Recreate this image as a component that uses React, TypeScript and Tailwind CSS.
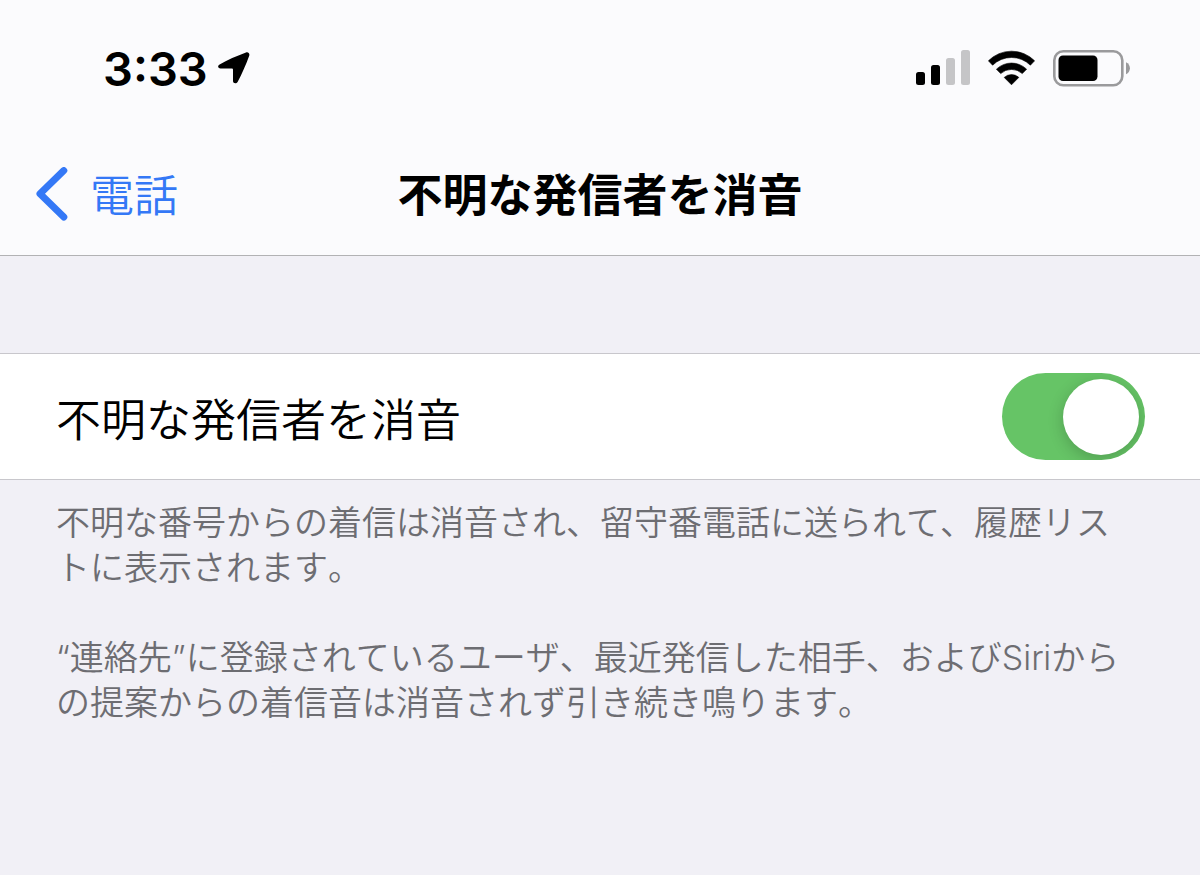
import * as React from "react";

const LocationArrow = () => (
  <svg width="32" height="32" viewBox="0 0 32 32" aria-hidden="true">
    <path
      d="M1.6 12.4C9 8.2 19 3.8 28 .5c2.2-.8 4 1 3.2 3.2C28 12.6 24 21.6 19.6 30c-1.2 2.2-4.6 1.6-4.6-.9V17.8c0-.9-.5-1.4-1.4-1.4H2.5c-2.7 0-3.2-2.7-.9-4Z"
      fill="currentColor"
    />
  </svg>
);

const SignalBars = () => (
  <svg width="54" height="36" viewBox="0 0 54 36" aria-hidden="true">
    <rect x="0" y="22" width="9" height="13" rx="2.5" fill="#000" />
    <rect x="15" y="15" width="9" height="20" rx="2.5" fill="#000" />
    <rect x="30" y="8" width="9" height="27" rx="2.5" fill="#c5c5c7" />
    <rect x="45" y="0" width="9" height="35" rx="2.5" fill="#c5c5c7" />
  </svg>
);

const WifiIcon = () => (
  <svg width="47" height="36" viewBox="0 0 47 36" aria-hidden="true">
    <g fill="#000" stroke="#000" strokeWidth="0.6" strokeLinejoin="round">
      <path d="M0.4 10.8A32.5 32.5 0 0 1 46.6 10.8L42.4 15.2A27 27 0 0 0 4.6 15.2Z" />
      <path d="M8.4 19.2A21.6 21.6 0 0 1 38.6 19.2L34.3 23.6A16 16 0 0 0 12.7 23.6Z" />
      <path d="M16.2 27.4A10.9 10.9 0 0 1 30.8 27.4L23.5 34.8Z" />
    </g>
  </svg>
);

const BatteryIcon = () => (
  <svg width="78" height="37" viewBox="0 0 78 37" aria-hidden="true">
    <rect
      x="1.3"
      y="1.3"
      width="68"
      height="34"
      rx="9"
      fill="none"
      stroke="#9a9a9c"
      strokeWidth="2.6"
    />
    <rect x="5.5" y="5.5" width="39" height="25.5" rx="4.5" fill="#000" />
    <path d="M73 12.3c5.2 2.2 5.2 9.8 0 12Z" fill="#9a9a9c" />
  </svg>
);

const BackChevron = () => (
  <svg width="32" height="58" viewBox="0 0 32 58" fill="none" aria-hidden="true">
    <path
      d="M27.8 3.6 4 26.8 27.8 50"
      stroke="currentColor"
      strokeWidth="7"
      strokeLinecap="round"
      strokeLinejoin="round"
    />
  </svg>
);

function StatusBar() {
  return (
    <div className="flex h-[136px] items-center justify-between pl-[103px] pr-[69px]">
      <div className="flex items-center gap-[10px]">
        <span className="text-[47px] font-semibold leading-none">3:33</span>
        <LocationArrow />
      </div>
      <div className="flex items-center gap-[18px]">
        <SignalBars />
        <WifiIcon />
        <BatteryIcon />
      </div>
    </div>
  );
}

function NavBar({ back, title }: { back: string; title: string }) {
  return (
    <nav className="grid h-[119px] grid-cols-[1fr_auto_1fr] items-center px-9 leading-none">
      <a
        href="#phone"
        className="flex items-center gap-[22px] justify-self-start text-[44px] font-[350] text-[#3478f6]"
      >
        <BackChevron />
        {back}
      </a>
      <h1 className="text-[45px] font-bold">{title}</h1>
    </nav>
  );
}

export default function App() {
  const [silence, setSilence] = React.useState(true);

  return (
    <div
      lang="ja"
      className="min-h-screen bg-[#f1f0f6] font-['Inter','Noto_Sans_CJK_JP',sans-serif] text-black"
    >
      <header className="border-b border-[#b2b2b4] bg-[#fbfbfd]">
        <StatusBar />
        <NavBar back="電話" title="不明な発信者を消音" />
      </header>

      <main className="pt-[97px]">
        <div className="flex h-[127px] items-center justify-between border-y border-[#c8c7cc] bg-white pl-14 pr-[55px]">
          <label htmlFor="silence" className="pt-2 text-[45px] font-[350] leading-none">
            不明な発信者を消音
          </label>
          <input
            id="silence"
            type="checkbox"
            role="switch"
            checked={silence}
            onChange={(e) => setSilence(e.target.checked)}
            className="flex h-[87px] w-[143px] shrink-0 appearance-none items-center overflow-hidden rounded-full bg-[#e9e9ea] px-[6px] before:size-[76px] before:rounded-full before:bg-white before:shadow-[0_4px_16px_rgba(0,0,0,0.2)] checked:justify-end checked:bg-[#66c466]"
          />
        </div>

        <div className="space-y-[45px] pl-14 pr-[60px] pt-5 text-[34px] font-[350] leading-[45px] text-[#6d6d72] [font-kerning:none]">
          <p>
            不明な番号からの着信は消音され、留守番電話に送られて、履歴リストに表示されます。
          </p>
          <p>
            “連絡先”に登録されているユーザ、最近発信した相手、およびSiriからの提案からの着信音は消音されず引き続き鳴ります。
          </p>
        </div>
      </main>
    </div>
  );
}
